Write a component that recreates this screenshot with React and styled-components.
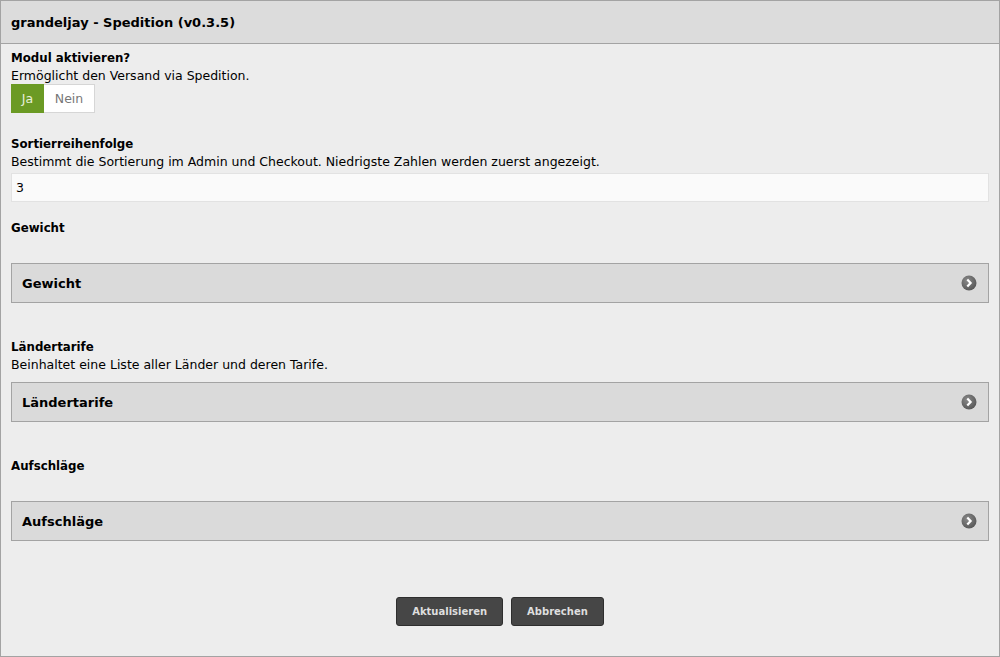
import React from "react";
import styled, { createGlobalStyle } from "styled-components";

const GlobalStyle = createGlobalStyle`
  html, body {
    margin: 0;
    padding: 0;
    background: #ededed;
  }
  body {
    font-family: "DejaVu Sans", Verdana, sans-serif;
    font-size: 12.5px;
    color: #000;
  }
`;

const Page = styled.div`
  box-sizing: border-box;
  width: 1000px;
  height: 657px;
  border: 1px solid #a3a3a3;
  background: #ededed;
  display: flex;
  flex-direction: column;
`;

const Header = styled.div`
  height: 42px;
  background: #dcdcdc;
  border-bottom: 1px solid #a3a3a3;
  display: flex;
  align-items: center;
  padding: 0 10px;
  font-weight: bold;
  font-size: 13px;
`;

const Body = styled.div`
  padding: 0 10px;
  display: flex;
  flex-direction: column;
`;

const Section = styled.div`
  display: flex;
  flex-direction: column;
  margin-top: ${(p) => p.top || 0}px;
`;

const Label = styled.div`
  font-weight: bold;
  font-size: 11.8px;
  line-height: 17px;
`;

const Desc = styled.div`
  line-height: 17px;
  min-height: 17px;
`;

const Toggle = styled.div`
  display: flex;
  width: 84px;
  height: 29px;
  box-sizing: border-box;
  border: 1px solid #d6d6d6;
  background: #fff;
`;

const ToggleOption = styled.div`
  flex: ${(p) => (p.active ? "0 0 33px" : "1")};
  display: flex;
  align-items: center;
  justify-content: center;
  background: ${(p) => (p.active ? "#6b9a24" : "#fff")};
  color: ${(p) => (p.active ? "#e8f0dc" : "#777")};
  margin: ${(p) => (p.active ? "-1px 0 -1px -1px" : "0")};
`;

const Input = styled.div`
  margin-top: 3px;
  height: 29px;
  box-sizing: border-box;
  background: #fafafa;
  border: 1px solid #e2e2e2;
  display: flex;
  align-items: center;
  padding: 0 4px;
`;

const Panel = styled.div`
  margin-top: ${(p) => p.top || 0}px;
  height: 40px;
  box-sizing: border-box;
  background: #dadada;
  border: 1px solid #a3a3a3;
  display: flex;
  align-items: center;
  justify-content: space-between;
  padding: 0 11px 0 10px;
  font-weight: bold;
  font-size: 13px;
`;

const Actions = styled.div`
  display: flex;
  justify-content: center;
  gap: 8px;
  margin-top: 56px;
`;

const Button = styled.div`
  height: 29px;
  box-sizing: border-box;
  padding: 0 15px;
  background: #464646;
  border: 1px solid #2e2e2e;
  border-radius: 3px;
  color: #dedede;
  font-weight: bold;
  font-size: 10px;
  display: flex;
  align-items: center;
`;

const Arrow = () => (
  <svg width="16" height="16" viewBox="0 0 16 16">
    <defs>
      <radialGradient id="ag" cx="40%" cy="35%" r="70%">
        <stop offset="0%" stopColor="#8a8a8a" />
        <stop offset="100%" stopColor="#555" />
      </radialGradient>
    </defs>
    <circle cx="8" cy="8" r="7.5" fill="url(#ag)" />
    <path d="M6.3 4.6 L9.6 8 L6.3 11.4" fill="none" stroke="#fff" strokeWidth="2.2" />
  </svg>
);

export default function App() {
  return (
    <>
      <GlobalStyle />
      <Page>
        <Header>grandeljay - Spedition (v0.3.5)</Header>
        <Body>
          <Section top={6}>
            <Label>Modul aktivieren?</Label>
            <Desc>Ermöglicht den Versand via Spedition.</Desc>
            <Toggle>
              <ToggleOption active>Ja</ToggleOption>
              <ToggleOption>Nein</ToggleOption>
            </Toggle>
          </Section>

          <Section top={23}>
            <Label>Sortierreihenfolge</Label>
            <Desc>
              Bestimmt die Sortierung im Admin und Checkout. Niedrigste Zahlen
              werden zuerst angezeigt.
            </Desc>
            <Input>3</Input>
          </Section>

          <Section top={18}>
            <Label>Gewicht</Label>
            <Desc />
            <Panel top={9}>
              Gewicht
              <Arrow />
            </Panel>
          </Section>

          <Section top={36}>
            <Label>Ländertarife</Label>
            <Desc>Beinhaltet eine Liste aller Länder und deren Tarife.</Desc>
            <Panel top={9}>
              Ländertarife
              <Arrow />
            </Panel>
          </Section>

          <Section top={36}>
            <Label>Aufschläge</Label>
            <Desc />
            <Panel top={9}>
              Aufschläge
              <Arrow />
            </Panel>
          </Section>

          <Actions>
            <Button>Aktualisieren</Button>
            <Button>Abbrechen</Button>
          </Actions>
        </Body>
      </Page>
    </>
  );
}
